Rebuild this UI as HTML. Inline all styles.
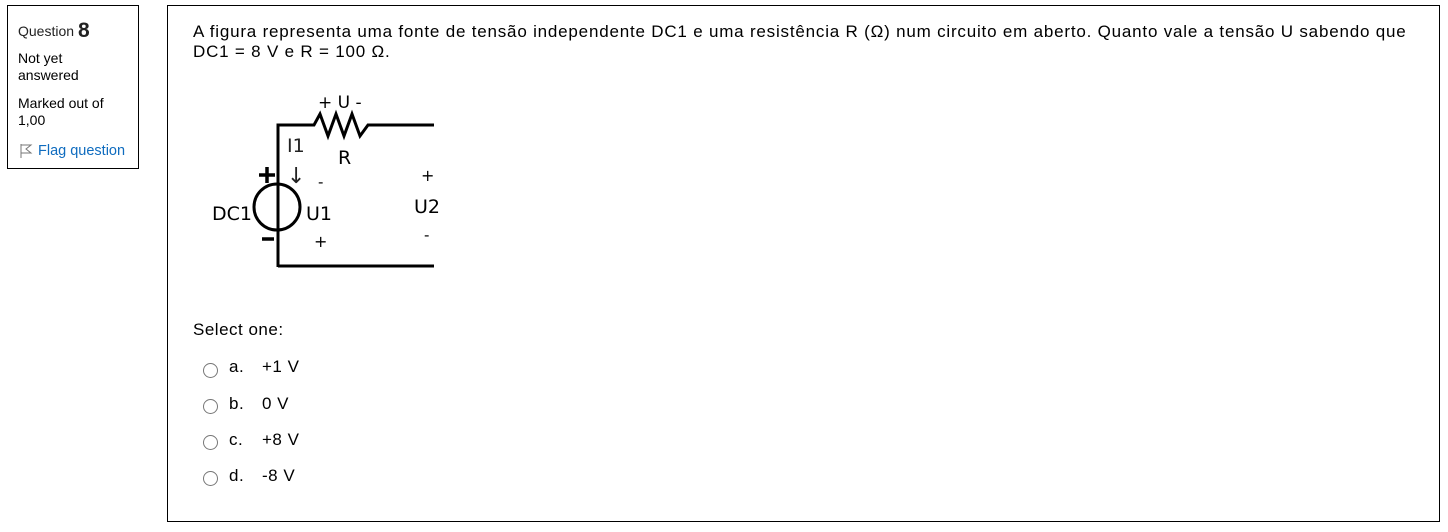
<!DOCTYPE html>
<html><head><meta charset="utf-8"><style>
body{margin:0;width:1448px;height:532px;background:#fff;font-family:"Liberation Sans",Arial,sans-serif;color:#000;position:relative;overflow:hidden}
.info{position:absolute;left:7px;top:5px;width:132px;height:164px;border:1px solid #000;box-sizing:border-box;font-size:14px;padding:0 10px}
.main{position:absolute;left:167px;top:5px;width:1273px;height:517px;border:1px solid #000;box-sizing:border-box}
.abs{position:absolute}
.r{position:absolute;left:203px;width:15px;height:15px;border:1px solid #777;border-radius:50%;box-sizing:border-box}
.opt{position:absolute;left:229px;font-size:17px;letter-spacing:0.5px}
.opt span{position:absolute;left:33px;white-space:nowrap}
</style></head><body>
<div class="info">
<div class="abs" style="left:10px;top:13px;font-size:14px;color:#222">Question <b style="font-size:21px;vertical-align:-1px">8</b></div>
<div class="abs" style="left:10px;top:44px;line-height:17px">Not yet<br>answered</div>
<div class="abs" style="left:10px;top:89px;line-height:17px">Marked out of<br>1,00</div>
<svg class="abs" style="left:11px;top:137px" width="14" height="16"><path d="M2 1 V15 M2 2 L12 2 L7 6 L12 10 L2 10" stroke="#777" stroke-width="1" fill="none"/></svg>
<div class="abs" style="left:30px;top:137px;color:#0f6cbf;white-space:nowrap;font-size:14.5px">Flag question</div>
</div>
<div class="main"></div>
<div class="abs" style="left:193px;top:22px;font-size:17px;line-height:20px;width:1230px;letter-spacing:0.8px">A figura representa uma fonte de tensão independente DC1 e uma resistência R (Ω) num circuito em aberto. Quanto vale a tensão U sabendo que DC1 = 8 V e R = 100 Ω.</div>
<svg class="abs" style="left:0;top:0" width="1448" height="532">
<g stroke="#000" stroke-width="3" fill="none">
<path d="M278 267 V125 H314 L320 114 L328 136 L336 114 L344 136 L352 114 L360 136 L368 125 H434"/>
<path d="M278 266 H434"/>
<circle cx="277" cy="207" r="23"/>
<path d="M259 175 H275 M267 167 V183" stroke-width="3.5"/>
<path d="M262 239 H274" stroke-width="3.5"/>
</g>
<g font-family="DejaVu Sans, Liberation Sans, sans-serif" fill="#000" font-size="19">
<text x="318" y="108" font-size="17">+ U -</text>
<text x="287" y="152" fill="#222">I1</text>
<text x="338" y="164">R</text>
<text x="287" y="183" font-size="22" fill="#222">↓</text>
<text x="318" y="187" font-size="15">-</text>
<text x="421" y="181" font-size="16">+</text>
<text x="212" y="220">DC1</text>
<text x="306" y="220">U1</text>
<text x="414" y="213">U2</text>
<text x="314" y="247" font-size="16">+</text>
<text x="424" y="240" font-size="15">-</text>
</g>
</svg>
<div class="abs" style="left:193px;top:320px;font-size:17px;letter-spacing:0.5px">Select one:</div>
<div class="r" style="top:363px"></div><div class="opt" style="top:357px">a.<span>+1 V</span></div>
<div class="r" style="top:399px"></div><div class="opt" style="top:394px">b.<span>0 V</span></div>
<div class="r" style="top:435px"></div><div class="opt" style="top:430px">c.<span>+8 V</span></div>
<div class="r" style="top:471px"></div><div class="opt" style="top:466px">d.<span>-8 V</span></div>
</body></html>
